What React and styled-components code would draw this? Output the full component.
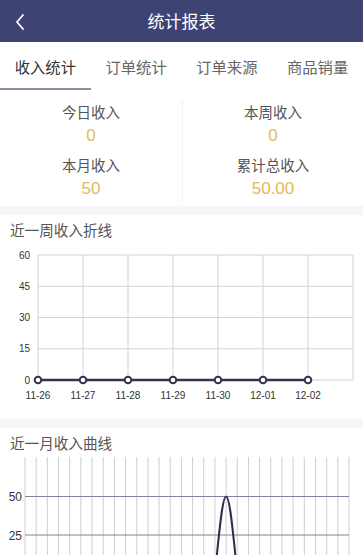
import React from 'react';
import styled, { createGlobalStyle } from 'styled-components';

const GlobalStyle = createGlobalStyle`
  body {
    margin: 0;
    background: #ffffff;
    font-family: "Noto Sans CJK SC", "Noto Sans", sans-serif;
  }
`;

const NAVY = '#3e4374';
const AXIS_FONT = 'Liberation Sans, Arial, sans-serif';

const Page = styled.div`
  width: 363px;
  height: 555px;
  overflow: hidden;
  background: #ffffff;
`;

const Header = styled.div`
  height: 42px;
  background-color: ${NAVY};
  display: flex;
  align-items: center;
  justify-content: center;
  position: relative;
`;

const BackButton = styled.div`
  position: absolute;
  left: 14px;
  top: 12px;
  width: 14px;
  height: 18px;
`;

const Title = styled.div`
  color: #ffffff;
  font-size: 17px;
  line-height: 42px;
`;

const Tabs = styled.div`
  height: 48px;
  display: flex;
  background: #ffffff;
`;

const Tab = styled.div`
  flex: 1;
  display: flex;
  align-items: center;
  justify-content: center;
  font-size: 15.3px;
  color: ${(p) => (p.$active ? '#333333' : '#666666')};
  border-bottom: 2px solid ${(p) => (p.$active ? '#8d8ea0' : 'transparent')};
  box-sizing: border-box;
  padding-top: 2px;
`;

const Stats = styled.div`
  height: 116px;
  display: grid;
  grid-template-columns: 182px 1fr;
`;

const StatColumn = styled.div`
  display: flex;
  flex-direction: column;
  align-items: center;
  gap: 5px;
  border-left: ${(p) => (p.$divided ? '1px solid #f0f0f0' : 'none')};
  margin: ${(p) => (p.$divided ? '10px 0 9px' : '0')};
  padding-top: ${(p) => (p.$divided ? '1px' : '11px')};
`;

const StatItem = styled.div`
  display: flex;
  flex-direction: column;
  align-items: center;
`;

const StatLabel = styled.div`
  font-size: 14.5px;
  line-height: 22px;
  color: #555555;
`;

const StatValue = styled.div`
  font-family: "Liberation Sans", Arial, sans-serif;
  font-size: 17px;
  line-height: 26px;
  color: #e2bb55;
`;

const Divider = styled.div`
  height: 9px;
  background: #f6f6f8;
`;

const Section = styled.div`
  background: #ffffff;
`;

const SectionTitle = styled.div`
  padding: 4px 0 0 10px;
  font-size: 14.6px;
  line-height: 22px;
  color: #555555;
`;

const ChartSvg = styled.svg`
  display: block;
`;

const weekDates = ['11-26', '11-27', '11-28', '11-29', '11-30', '12-01', '12-02'];

function WeekChart() {
  const left = 38;
  const right = 353;
  const top = 14;
  const bottom = 139;
  const step = 45;
  const ys = [60, 45, 30, 15, 0];
  const xs = [];
  for (let i = 0; i < 8; i++) xs.push(left + i * step);
  const points = weekDates.map((d, i) => left + i * step);

  return (
    <ChartSvg width="363" height="178" viewBox="0 0 363 178">
      {ys.map((v, i) => {
        const y = top + ((bottom - top) / 4) * i;
        return (
          <g key={v}>
            <line x1={left} x2={right} y1={y} y2={y} stroke="#cdd3df" strokeWidth="1" />
            <text x="30" y={y + 3.5} textAnchor="end" fontSize="10" fill="#333" fontFamily={AXIS_FONT}>
              {v}
            </text>
          </g>
        );
      })}
      {xs.map((x) => (
        <line key={x} x1={x} x2={x} y1={top} y2={bottom} stroke="#cdd3df" strokeWidth="1" />
      ))}
      <line x1={left} x2={points[6]} y1={bottom} y2={bottom} stroke="#33344f" strokeWidth="2.5" />
      {points.map((x) => (
        <circle key={x} cx={x} cy={bottom} r="3.3" fill="#ffffff" stroke="#33344f" strokeWidth="2" />
      ))}
      {weekDates.map((d, i) => (
        <text
          key={d}
          x={points[i]}
          y={bottom + 19}
          textAnchor="middle"
          fontSize="10"
          fill="#333"
          fontFamily={AXIS_FONT}
        >
          {d}
        </text>
      ))}
    </ChartSvg>
  );
}

function MonthChart() {
  const left = 25;
  const right = 349;
  const count = 30;
  const step = (right - left) / (count - 1);
  const xs = [];
  for (let i = 0; i < count; i++) xs.push(left + i * step);
  const peak = left + 18 * step;
  const y50 = 42.5;
  const y25 = 81;
  const y0 = 120;

  return (
    <ChartSvg width="363" height="120" viewBox="0 0 363 120">
      {xs.map((x) => (
        <line key={x} x1={x} x2={x} y1="3" y2="120" stroke="#cfcfd4" strokeWidth="1" />
      ))}
      <line x1={left} x2={right} y1={y50} y2={y50} stroke="#7f8299" strokeWidth="1" />
      <line x1={left} x2={right} y1={y25} y2={y25} stroke="#7f8299" strokeWidth="1" />
      <text x="22" y={y50 + 4.5} textAnchor="end" fontSize="12" fill="#333" fontFamily={AXIS_FONT}>
        50
      </text>
      <text x="22" y={y25 + 4.5} textAnchor="end" fontSize="12" fill="#333" fontFamily={AXIS_FONT}>
        25
      </text>
      <path
        d={`M ${peak - 12} ${y0 + 8} C ${peak - 7} ${y0 - 40}, ${peak - 4} ${y50}, ${peak} ${y50} C ${peak + 4} ${y50}, ${peak + 7} ${y0 - 40}, ${peak + 12} ${y0 + 8}`}
        fill="none"
        stroke="#2e2f4a"
        strokeWidth="2"
      />
    </ChartSvg>
  );
}

const tabNames = ['收入统计', '订单统计', '订单来源', '商品销量'];

const stats = [
  [
    { label: '今日收入', value: '0' },
    { label: '本月收入', value: '50' },
  ],
  [
    { label: '本周收入', value: '0' },
    { label: '累计总收入', value: '50.00' },
  ],
];

export default function App() {
  return (
    <Page>
      <GlobalStyle />
      <Header>
        <BackButton>
          <svg width="14" height="18" viewBox="0 0 14 18">
            <path d="M9 2 L3 9 L9 16" fill="none" stroke="#ffffff" strokeWidth="1.8" strokeLinecap="round" strokeLinejoin="round" />
          </svg>
        </BackButton>
        <Title>统计报表</Title>
      </Header>

      <Tabs>
        {tabNames.map((name, i) => (
          <Tab key={name} $active={i === 0}>
            {name}
          </Tab>
        ))}
      </Tabs>

      <Stats>
        {stats.map((col, ci) => (
          <StatColumn key={ci} $divided={ci === 1}>
            {col.map((s) => (
              <StatItem key={s.label}>
                <StatLabel>{s.label}</StatLabel>
                <StatValue>{s.value}</StatValue>
              </StatItem>
            ))}
          </StatColumn>
        ))}
      </Stats>

      <Divider />

      <Section>
        <SectionTitle>近一周收入折线</SectionTitle>
        <WeekChart />
      </Section>

      <Divider />

      <Section>
        <SectionTitle>近一月收入曲线</SectionTitle>
        <MonthChart />
      </Section>
    </Page>
  );
}
